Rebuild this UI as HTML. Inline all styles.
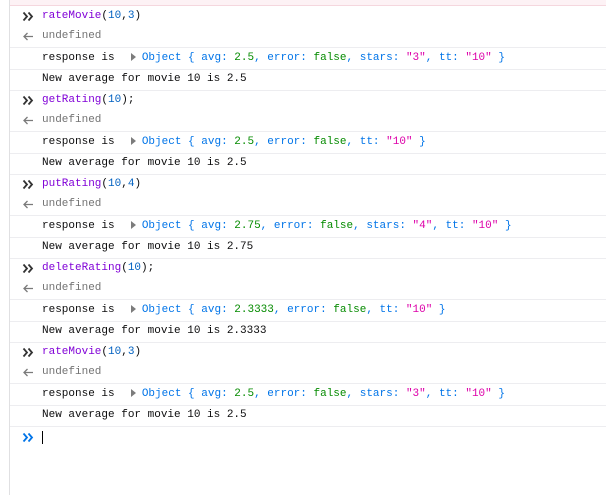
<!DOCTYPE html>
<html><head><style>
body{margin:0;width:606px;height:495px;background:#fff;overflow:hidden;position:relative;font-family:"Liberation Mono",monospace;font-size:11px;}
.top{position:absolute;left:10px;right:0;top:0;height:5px;background:#fdf2f5;border-bottom:1px solid #f5d7de;}
.lb{position:absolute;left:9px;top:0;bottom:0;width:1px;background:#e0e0e2;}
.row{position:absolute;left:10px;right:0;height:21px;line-height:21px;white-space:pre;}
.sep{border-bottom:1px solid #ededf0;}
.t{position:absolute;left:32px;color:#0c0c0d;}
.ic{position:absolute;left:12px;top:5px;}
.f{color:#8000d7}.n{color:#0060c0}.b{color:#0074e8}.g{color:#058b00}.p{color:#dd00a9}.u{color:#737373}
.tri{display:inline-block;width:0;height:0;border-left:5px solid #7c7c7c;border-top:4px solid transparent;border-bottom:4px solid transparent;margin:0 6px 0 3px;vertical-align:-1px}
</style></head><body>
<div class="top"></div><div class="lb"></div>
<div id="c"></div>
<script>
var chev=function(c){return '<svg class="ic" width="12" height="11" viewBox="0 0 12 11"><path d="M1.5 1.5L5 5.5L1.5 9.5M6.5 1.5L10 5.5L6.5 9.5" fill="none" stroke="'+c+'" stroke-width="1.8"/></svg>';};
var arr='<svg class="ic" width="12" height="11" viewBox="0 0 12 11"><path d="M11 5.5H2M5.5 2L2 5.5L5.5 9" fill="none" stroke="#7a7a7a" stroke-width="1.3"/></svg>';
var blocks=[
['rateMovie','10,3','avg: <span class="g">2.5</span>, error: <span class="g">false</span>, stars: <span class="p">"3"</span>, tt: <span class="p">"10"</span> ','2.5'],
['getRating','10','avg: <span class="g">2.5</span>, error: <span class="g">false</span>, tt: <span class="p">"10"</span> ','2.5',';'],
['putRating','10,4','avg: <span class="g">2.75</span>, error: <span class="g">false</span>, stars: <span class="p">"4"</span>, tt: <span class="p">"10"</span> ','2.75'],
['deleteRating','10','avg: <span class="g">2.3333</span>, error: <span class="g">false</span>, tt: <span class="p">"10"</span> ','2.3333',';'],
['rateMovie','10,3','avg: <span class="g">2.5</span>, error: <span class="g">false</span>, stars: <span class="p">"3"</span>, tt: <span class="p">"10"</span> ','2.5']];
var h='';
blocks.forEach(function(b,i){var y=6+i*84;
h+='<div class="row" style="top:'+y+'px">'+chev('#333')+'<span class="t"><span class="f">'+b[0]+'</span>(<span class="n">'+b[1].replace(',','</span>,<span class="n">')+'</span>)'+(b[4]||'')+'</span></div>';
h+='<div class="row sep" style="top:'+(y+20)+'px">'+arr+'<span class="t u">undefined</span></div>';
h+='<div class="row sep" style="top:'+(y+42)+'px"><span class="t">response is  <span class="tri"></span><span class="b">Object { '+b[2].replace(/(avg|error|stars|tt):/g,'<span class="b">$1</span>:')+'}</span></span></div>';
h+='<div class="row sep" style="top:'+(y+63)+'px"><span class="t">New average for movie 10 is '+b[3]+'</span></div>';
});
h+='<div class="row" style="top:427px">'+chev('#0074e8')+'<span class="t" style="top:4px;height:13px;width:1px;background:#000;left:32px"></span></div>';
document.getElementById('c').innerHTML=h;
</script>
</body></html>
